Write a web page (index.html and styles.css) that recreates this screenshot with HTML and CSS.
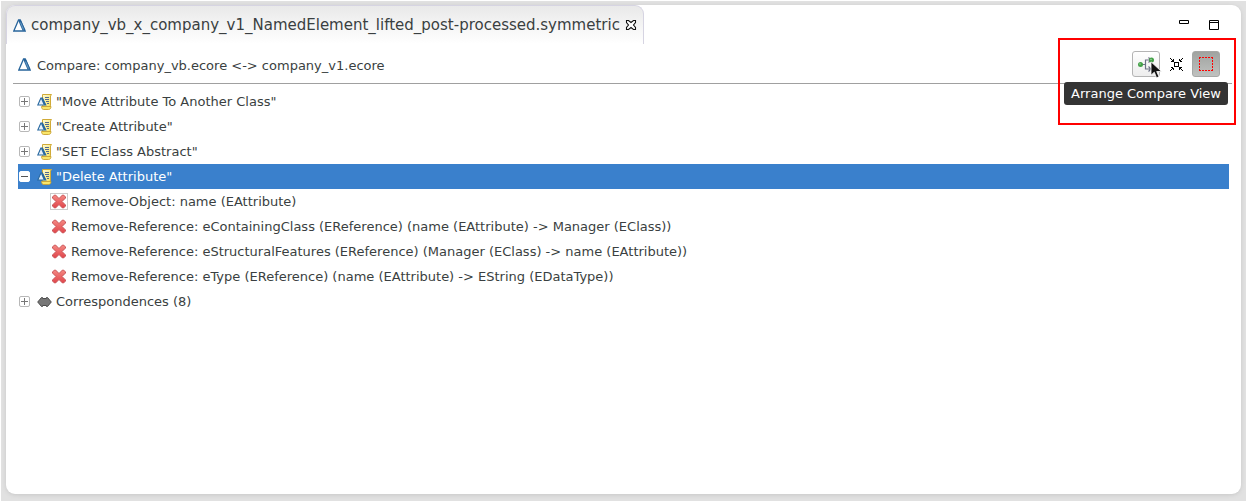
FILE: index.html
```html
<!DOCTYPE html>
<html lang="en">
<head>
<meta charset="utf-8">
<title>Compare Editor</title>
<link rel="stylesheet" href="styles.css">
</head>
<body>
<svg class="defs" aria-hidden="true">
  <defs>
    <linearGradient id="paper" x1="0" y1="0" x2="1" y2="1"><stop offset="0" stop-color="#fffbd8"/><stop offset="1" stop-color="#f7e04c"/></linearGradient>
    <linearGradient id="red" x1="0" y1="0" x2="0" y2="1"><stop offset="0" stop-color="#f58a84"/><stop offset="1" stop-color="#e0444a"/></linearGradient>
    <symbol id="delta" viewBox="0 0 13 13"><path d="M5.500 1L.8 12h11.400L7 1z" fill="#fff" stroke="#27649b" stroke-width="1.300"/><path d="M6.500 1l4.500 10.500" stroke="#27649b" stroke-width="2.800"/><path d="M7.500 3.500l3 7" stroke="#8db4d6" stroke-width=".7"/></symbol>
    <symbol id="script" viewBox="0 0 15 16"><path d="M5.500.500h9L13.500 2v9l-1 3.500h-6L5.500 11z" fill="url(#paper)" stroke="#d0aa38"/><path d="M4.500 12.500h9.500c0 2-1 3-2.500 3H6.500c-1 0-2-1-2-3z" fill="#f9e66a" stroke="#c8a232" stroke-width=".9"/><path d="M8 3.500h4M8 5.500h4M9 7.500h3M10 9.500h2" stroke="#526991"/><path d="M3.900 4L.8 11h8L5.300 4z" fill="#e8f0f8" stroke="#2868a0" stroke-width="1.100"/><path d="M4.800 4l3 6.800" stroke="#2868a0" stroke-width="2"/></symbol>
    <symbol id="cross" viewBox="0 0 16 15"><path d="M1.500 3l2-2h1l3.500 3.500L11.500 1h1l2 2v1L11 7.500l3.500 3.500v1l-2 2h-1L8 10.500 4.500 14h-1l-2-2v-1L5 7.500 1.500 4z" fill="url(#red)" stroke="#c95558"/></symbol>
  </defs>
</svg>
<div class="frame">
  <main class="panel">
    <div class="tabbar">
      <div class="tab">
        <svg class="delta"><use href="#delta"/></svg>
        <span class="tab-title">company_vb_x_company_v1_NamedElement_lifted_post-processed.symmetric</span>
        <button class="bare" aria-label="Close tab"><svg width="12" height="12" viewBox="0 0 12 12"><path d="M1.500 1.500h2l2.500 2 2.500-2h2v2l-2 2.500 2 2.500v2h-2L6 8.500l-2.500 2h-2v-2l2-2.500-2-2.500z" fill="#fff" stroke="#111" stroke-width="1.100"/></svg></button>
      </div>
      <div class="window-buttons">
        <button class="bare" aria-label="Minimize"><svg width="10" height="10" viewBox="0 0 10 10"><path d="M.5.500h9v3h-9z" fill="#fff" stroke="#000"/></svg></button>
        <button class="bare" aria-label="Maximize"><svg width="10" height="10" viewBox="0 0 10 10"><path d="M.5.500h9v9h-9zM0 2.500h10" fill="#fff" stroke="#000"/></svg></button>
      </div>
    </div>
    <header class="header">
      <svg class="delta"><use href="#delta"/></svg>
      <h1 class="heading">Compare: company_vb.ecore &lt;-&gt; company_v1.ecore</h1>
      <div class="tools">
        <button class="tool hover" aria-label="Arrange Compare View" aria-describedby="tip"><svg width="16" height="16" viewBox="0 0 16 16"><path d="M4 8.500h3M7.500 3.500v10M7 4h5M7 13h5M10.500 1.500L13 4l-2.500 2.500M10.500 10.500L13 13l-2.500 2.500" fill="none" stroke="#6d7186" stroke-width="1.200"/><circle cx="2.500" cy="8.500" r="2.500" fill="#43a047"/><circle cx="2" cy="8" r=".8" fill="#9bd49e"/><circle cx="13.500" cy="4" r="2.500" fill="#43a047"/><circle cx="13" cy="3.500" r=".8" fill="#9bd49e"/></svg></button>
        <button class="tool plain" aria-label="Collapse"><svg width="13" height="13" viewBox="0 0 13 13" shape-rendering="crispEdges"><path d="M4.500 4.500h4v4h-4z" fill="#fff" stroke="#000"/><path d="M0 0h1v1h1v1h1v1h1v1H1V3h1V2H1V1H0zM3 1h1v3H3zM13 0h-1v1h-1v1h-1v1H9v1h3V3h-1V2h1V1h1zM9 1h1v3H9zM0 13h1v-1h1v-1h1v-1h1V9H1v1h1v1H1v1H0zM3 9h1v3H3zM13 13h-1v-1h-1v-1h-1v-1H9V9h3v1h-1v1h1v1h1zM9 9h1v3H9z"/></svg></button>
        <button class="tool pressed" aria-label="Show selection" aria-pressed="true"><svg width="14" height="14" viewBox="0 0 14 14" shape-rendering="crispEdges"><path d="M0 .5h14M0 13.500h14M.5 0v14M13.500 0v14" stroke="#f00" stroke-dasharray="2 1"/></svg></button>
        <div class="highlight"></div>
        <div class="tooltip" role="tooltip" id="tip">Arrange Compare View</div>
        <svg class="cursor" width="13" height="18" viewBox="0 0 13 18"><path d="M1 .8v13.400l3.300-3 2.200 5.600 2.500-1-2.300-5.300h4.800z" fill="#111" stroke="#fff" stroke-width=".8"/></svg>
      </div>
    </header>
    <ul class="tree">
      <li><div class="row"><button class="twistie" aria-label="Expand" aria-expanded="false"></button><svg class="script"><use href="#script"/></svg><span>"Move Attribute To Another Class"</span></div></li>
      <li><div class="row"><button class="twistie" aria-label="Expand" aria-expanded="false"></button><svg class="script"><use href="#script"/></svg><span>"Create Attribute"</span></div></li>
      <li><div class="row"><button class="twistie" aria-label="Expand" aria-expanded="false"></button><svg class="script"><use href="#script"/></svg><span>"SET EClass Abstract"</span></div></li>
      <li><div class="row selected"><button class="twistie" aria-label="Collapse" aria-expanded="true"></button><svg class="script"><use href="#script"/></svg><span>"Delete Attribute"</span></div>
        <ul class="children">
          <li class="row"><svg class="cross boxed"><use href="#cross"/></svg><span>Remove-Object: name (EAttribute)</span></li>
          <li class="row"><svg class="cross"><use href="#cross"/></svg><span>Remove-Reference: eContainingClass (EReference) (name (EAttribute) -&gt; Manager (EClass))</span></li>
          <li class="row"><svg class="cross"><use href="#cross"/></svg><span>Remove-Reference: eStructuralFeatures (EReference) (Manager (EClass) -&gt; name (EAttribute))</span></li>
          <li class="row"><svg class="cross"><use href="#cross"/></svg><span>Remove-Reference: eType (EReference) (name (EAttribute) -&gt; EString (EDataType))</span></li>
        </ul>
      </li>
      <li><div class="row"><button class="twistie" aria-label="Expand" aria-expanded="false"></button><svg class="script" viewBox="0 0 15 16"><path d="M.7 8L4.500 3.500h1v1h4v-1h1L14.300 8l-3.800 4.500h-1v-1h-4v1h-1z" fill="#777" stroke="#4c4c4c"/></svg><span>Correspondences (8)</span></div></li>
    </ul>
  </main>
</div>
</body>
</html>
```

FILE: styles.css
```css
* { box-sizing: border-box; }

body {
  margin: 0;
  padding: 1px 2px 2px 1px;
  min-height: 100vh;
  display: flex;
  background: #fff;
  color: #3a3f41;
  font: 13px/25px "DejaVu Sans", Verdana, sans-serif;
}

ul { margin: 0; padding: 0; list-style: none; }
svg { display: block; flex: none; }
button { padding: 0; border: 0; background: none; flex: none; }

.defs { position: absolute; width: 0; height: 0; }

.frame {
  flex: 1;
  display: flex;
  padding: 4px 5px 7px;
  background: #e1e1e1;
}

.panel {
  flex: 1;
  min-width: 0;
  background: #fff;
  border-radius: 9px;
  box-shadow: 0 1px 4px #c8c8c8;
}

.tabbar {
  display: flex;
  justify-content: space-between;
  height: 39px;
}

.tab {
  display: flex;
  align-items: center;
  padding: 0 6px;
  border: 1px solid #d6d4e2;
  border-bottom: 0;
  border-radius: 9px 9px 0 0;
  background: linear-gradient(#e9e9e9, #fff);
}

.tab-title { font-size: 15px; margin: 0 5px; white-space: nowrap; }

.delta { width: 13px; height: 13px; }

.window-buttons {
  display: flex;
  align-items: flex-start;
  gap: 20px;
  padding: 15px 22px;
}

.header {
  display: flex;
  align-items: center;
  gap: 6px;
  height: 40px;
  margin: 0 9px 0 7px;
  padding: 1px 12px 0 5px;
  border-bottom: 1px solid #a0a0a0;
}

.heading { margin: 0; padding-top: 2px; font-size: 13px; font-weight: normal; flex: 1; }

.tools { position: relative; display: flex; gap: 2px; }

.tool {
  display: grid;
  place-items: center;
  width: 28px;
  height: 26px;
  border: 1px solid transparent;
  border-radius: 3px;
}

.hover { border-color: #b4b4b4; background: linear-gradient(#fff, #ededed); }
.pressed { border-color: #a6a8a6; background: linear-gradient(#a0a3a0, #bfc1bf); }

.highlight {
  position: absolute;
  top: -13px;
  right: -16px;
  width: 178px;
  height: 87px;
  border: 2px solid #f00;
  pointer-events: none;
}

.tooltip {
  position: absolute;
  top: 31px;
  right: -8px;
  padding: 0 7px;
  border-radius: 3px;
  background: #343434;
  color: #fff;
  line-height: 23px;
  white-space: nowrap;
}

.cursor { position: absolute; left: 18px; top: 10px; }

.tree { padding: 5px 12px; }
.row { display: flex; align-items: center; gap: 4px; height: 25px; white-space: nowrap; }
.selected { background: #3a80cc; color: #fff; }
.children { padding-left: 33px; }

.twistie {
  width: 11px;
  height: 11px;
  margin: 0 3px 0 1px;
  border: 1px solid #b8b8b8;
  border-radius: 2px;
  background:
    linear-gradient(#777, #777) center / 7px 1px no-repeat,
    linear-gradient(#777, #777) center / 1px 7px no-repeat,
    #fff;
}

.twistie[aria-expanded="true"] {
  border-color: #fff;
  background: linear-gradient(#555, #555) center / 7px 1px no-repeat, #fff;
}

.script { width: 15px; height: 16px; }
.cross { width: 16px; height: 15px; }
.boxed { outline: 1px solid #ccc; }
```
